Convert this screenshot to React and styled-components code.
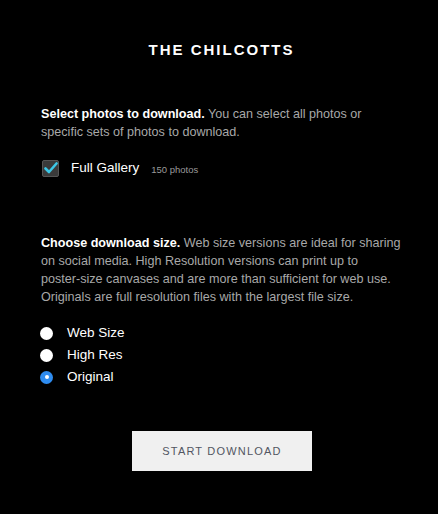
import React, { useState } from 'react'
import styled, { createGlobalStyle } from 'styled-components'

const GlobalStyle = createGlobalStyle`
  html, body {
    margin: 0;
    padding: 0;
    background: #000;
  }
  body {
    font-family: "Liberation Sans", Arial, sans-serif;
  }
`

const sizes = [
  { id: 'web', label: 'Web Size' },
  { id: 'high', label: 'High Res' },
  { id: 'original', label: 'Original' },
]

const App = () => {
  const [size, setSize] = useState('original')
  const [full, setFull] = useState(true)

  return (
    <>
      <GlobalStyle />
      <Page>
        <Title>THE CHILCOTTS</Title>

        <Section>
          <Text>
            <strong>Select photos to download.</strong> You can select all photos or<br />
            specific sets of photos to download.
          </Text>
          <CheckRow onClick={() => setFull(!full)}>
            <CheckBox>
              {full && (
                <svg width="14" height="12" viewBox="0 0 14 12">
                  <path d="M1.5 6.5 L5 10 L12.5 1.5" fill="none" stroke="#3cc7e6" strokeWidth="2.6" strokeLinecap="round" strokeLinejoin="round" />
                </svg>
              )}
            </CheckBox>
            <OptionLabel>Full Gallery</OptionLabel>
            <Count>150 photos</Count>
          </CheckRow>
        </Section>

        <Section $top={55}>
          <Text>
            <strong>Choose download size.</strong> Web size versions are ideal for sharing<br />
            on social media. High Resolution versions can print up to<br />
            poster-size canvases and are more than sufficient for web use.<br />
            Originals are full resolution files with the largest file size.
          </Text>
          <RadioList>
            {sizes.map((item) => (
              <RadioRow key={item.id} onClick={() => setSize(item.id)}>
                <Radio $checked={size === item.id} />
                <OptionLabel>{item.label}</OptionLabel>
              </RadioRow>
            ))}
          </RadioList>
        </Section>

        <ButtonWrap>
          <Button>START DOWNLOAD</Button>
        </ButtonWrap>
      </Page>
    </>
  )
}

const Page = styled.div`
  width: 438px;
  height: 514px;
  box-sizing: border-box;
  padding: 40px 20px 0 41px;
  background: #000;
`

const Title = styled.h1`
  margin: 0;
  text-align: center;
  color: #fff;
  font-size: 15px;
  font-weight: 600;
  letter-spacing: 2px;
  line-height: 20px;
  padding-right: 16px;
`

const Section = styled.div`
  margin-top: ${(p) => (p.$top || 45)}px;
`

const Text = styled.p`
  margin: 0;
  color: #a8a8a8;
  font-size: 12.6px;
  line-height: 18px;
  white-space: nowrap;

  strong {
    color: #fff;
    font-weight: 700;
  }
`

const CheckRow = styled.div`
  display: flex;
  align-items: center;
  margin-top: 16px;
  cursor: pointer;
`

const CheckBox = styled.span`
  width: 17px;
  height: 17px;
  box-sizing: border-box;
  border-radius: 2px;
  background: #3a3a3a;
  border: 1px solid #555;
  display: flex;
  align-items: center;
  justify-content: center;
  margin-left: 1px;
  margin-right: 12px;
`

const OptionLabel = styled.span`
  color: #fff;
  font-size: 13.5px;
  line-height: 22px;
`

const Count = styled.span`
  color: #9a9a9a;
  font-size: 9.5px;
  margin-left: 12px;
  margin-top: 2px;
`

const RadioList = styled.div`
  display: flex;
  flex-direction: column;
  margin-top: 16px;
`

const RadioRow = styled.div`
  display: flex;
  align-items: center;
  cursor: pointer;
`

const Radio = styled.span`
  width: 13px;
  height: 13px;
  border-radius: 50%;
  margin-left: -1px;
  margin-right: 14px;
  box-sizing: border-box;
  background: ${(p) => (p.$checked ? '#2e8cf0' : '#fff')};
  position: relative;

  &::after {
    content: '';
    display: ${(p) => (p.$checked ? 'block' : 'none')};
    position: absolute;
    width: 4px;
    height: 4px;
    left: 4.5px;
    top: 4.5px;
    border-radius: 50%;
    background: #fff;
  }
`

const ButtonWrap = styled.div`
  display: flex;
  justify-content: center;
  margin-top: 43px;
  margin-left: -41px;
  margin-right: -20px;
  padding-left: 6px;
`

const Button = styled.button`
  width: 180px;
  height: 40px;
  border: none;
  background: #f0f0f0;
  color: #525662;
  font-family: "Liberation Sans", Arial, sans-serif;
  font-size: 11px;
  letter-spacing: 1.2px;
  cursor: pointer;
`

export default App
